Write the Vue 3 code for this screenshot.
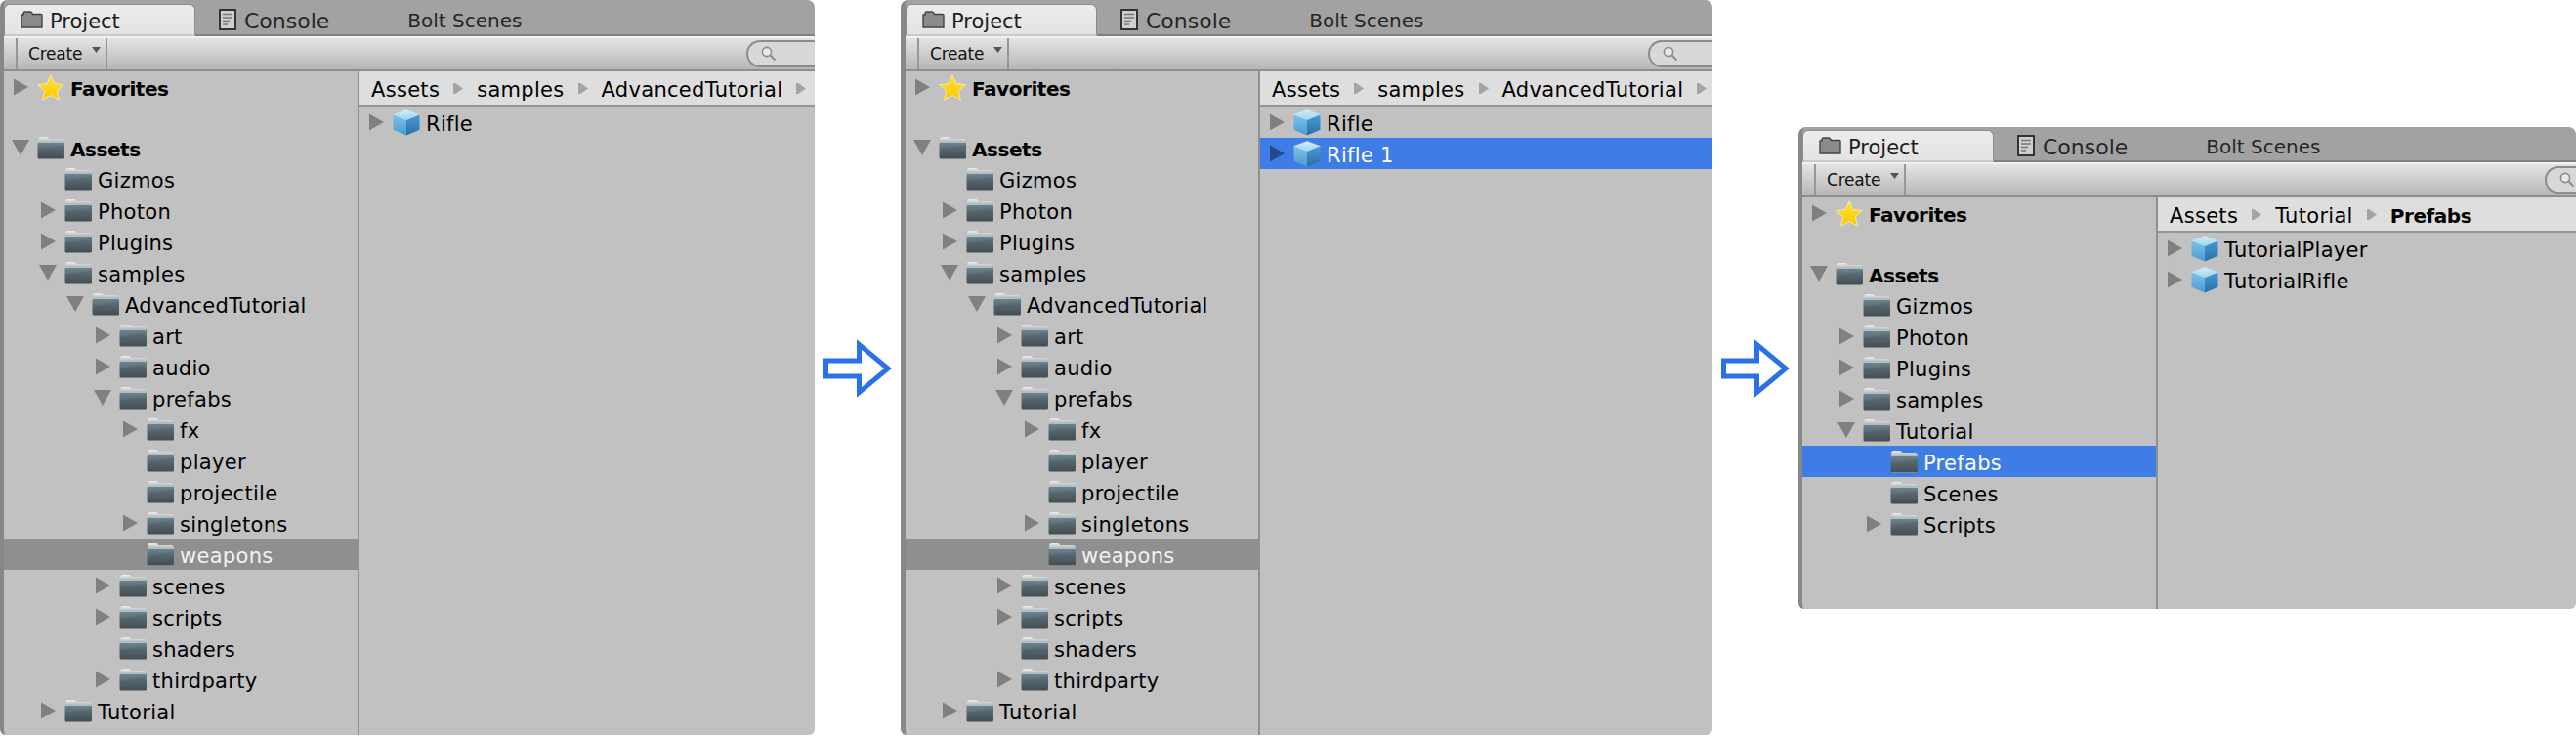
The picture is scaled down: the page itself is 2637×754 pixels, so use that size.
<script setup>
const baseTree = [
  { label: 'Favorites', depth: 0, arrow: 'r', icon: 'star', bold: true, first: true },
  { blank: true },
  { label: 'Assets', depth: 0, arrow: 'd', icon: 'folder', bold: true },
]
const longTree = [
  ...baseTree,
  { label: 'Gizmos', depth: 1, icon: 'folder' },
  { label: 'Photon', depth: 1, arrow: 'r', icon: 'folder' },
  { label: 'Plugins', depth: 1, arrow: 'r', icon: 'folder' },
  { label: 'samples', depth: 1, arrow: 'd', icon: 'folder' },
  { label: 'AdvancedTutorial', depth: 2, arrow: 'd', icon: 'folder' },
  { label: 'art', depth: 3, arrow: 'r', icon: 'folder' },
  { label: 'audio', depth: 3, arrow: 'r', icon: 'folder' },
  { label: 'prefabs', depth: 3, arrow: 'd', icon: 'folder' },
  { label: 'fx', depth: 4, arrow: 'r', icon: 'folder' },
  { label: 'player', depth: 4, icon: 'folder' },
  { label: 'projectile', depth: 4, icon: 'folder' },
  { label: 'singletons', depth: 4, arrow: 'r', icon: 'folder' },
  { label: 'weapons', depth: 4, icon: 'folder', sel: 'grey' },
  { label: 'scenes', depth: 3, arrow: 'r', icon: 'folder' },
  { label: 'scripts', depth: 3, arrow: 'r', icon: 'folder' },
  { label: 'shaders', depth: 3, icon: 'folder' },
  { label: 'thirdparty', depth: 3, arrow: 'r', icon: 'folder' },
  { label: 'Tutorial', depth: 1, arrow: 'r', icon: 'folder' },
]
const shortTree = [
  ...baseTree,
  { label: 'Gizmos', depth: 1, icon: 'folder' },
  { label: 'Photon', depth: 1, arrow: 'r', icon: 'folder' },
  { label: 'Plugins', depth: 1, arrow: 'r', icon: 'folder' },
  { label: 'samples', depth: 1, arrow: 'r', icon: 'folder' },
  { label: 'Tutorial', depth: 1, arrow: 'd', icon: 'folder' },
  { label: 'Prefabs', depth: 2, icon: 'folder', sel: 'blue' },
  { label: 'Scenes', depth: 2, icon: 'folder' },
  { label: 'Scripts', depth: 2, arrow: 'r', icon: 'folder' },
]
const longCrumbs = [{ t: 'Assets' }, { t: 'samples' }, { t: 'AdvancedTutorial' }, { sep: true }]
const panels = [
  { id: 'p1', tree: longTree, crumbs: longCrumbs,
    items: [{ label: 'Rifle', depth: 0, arrow: 'r', icon: 'cube' }] },
  { id: 'p2', tree: longTree, crumbs: longCrumbs,
    items: [
      { label: 'Rifle', depth: 0, arrow: 'r', icon: 'cube' },
      { label: 'Rifle 1', depth: 0, arrow: 'r', icon: 'cube', sel: 'blue' },
    ] },
  { id: 'p3', tree: shortTree,
    crumbs: [{ t: 'Assets' }, { t: 'Tutorial' }, { t: 'Prefabs', bold: true }],
    items: [
      { label: 'TutorialPlayer', depth: 0, arrow: 'r', icon: 'cube' },
      { label: 'TutorialRifle', depth: 0, arrow: 'r', icon: 'cube' },
    ] },
]
const indent = (r) => ({ paddingLeft: 10 + 28 * r.depth + 'px' })
</script>

<template>
  <div class="page">
    <svg class="defs" width="0" height="0" aria-hidden="true">
      <defs>
        <linearGradient id="fBody" x1="0" y1="0" x2="0" y2="1">
          <stop offset="0" stop-color="#6f8791" />
          <stop offset="0.45" stop-color="#5a6a72" />
          <stop offset="1" stop-color="#46525a" />
        </linearGradient>
        <linearGradient id="fTab" x1="0" y1="0" x2="0" y2="1">
          <stop offset="0" stop-color="#efefef" />
          <stop offset="1" stop-color="#8f9496" />
        </linearGradient>
        <linearGradient id="cTop" x1="0" y1="0" x2="0" y2="1">
          <stop offset="0" stop-color="#d4eefa" />
          <stop offset="1" stop-color="#9ad3f0" />
        </linearGradient>
        <linearGradient id="cLeft" x1="0" y1="0" x2="0" y2="1">
          <stop offset="0" stop-color="#7cc3ec" />
          <stop offset="1" stop-color="#4b9ad0" />
        </linearGradient>
        <linearGradient id="cRight" x1="0" y1="0" x2="0" y2="1">
          <stop offset="0" stop-color="#4a9bd4" />
          <stop offset="1" stop-color="#2a6fa6" />
        </linearGradient>
        <linearGradient id="sFill" x1="0" y1="0" x2="0" y2="1">
          <stop offset="0" stop-color="#ffe23a" />
          <stop offset="1" stop-color="#fcc800" />
        </linearGradient>
      </defs>
      <symbol id="i-folder" viewBox="0 0 28 24">
        <path d="M1 8V3.5C1 2 2 1 3.5 1H9.5C11 1 11.6 1.8 12.4 3H25.5C27 3 28 4 28 5.5V9H1Z" fill="url(#fTab)" />
        <rect x="0.5" y="6" width="27.5" height="18" rx="2" fill="url(#fBody)" />
        <path d="M1 6.5H27.5" stroke="#a9c0ca" stroke-width="1" />
        <path d="M1 14L27.5 9V23H1Z" fill="#000" opacity="0.06" />
        <path d="M1 23.6H27.5" stroke="#9a9a9a" stroke-width="0.8" />
      </symbol>
      <symbol id="i-cube" viewBox="0 0 28 27">
        <path d="M14 0.5L27.5 5.5L14 11L0.5 5.5Z" fill="url(#cTop)" stroke="#c5e6f7" stroke-width="0.6" stroke-linejoin="round" />
        <path d="M0.5 5.5L14 11V26.5L2 21.5C1 21 0.5 20.4 0.5 19.5Z" fill="url(#cLeft)" />
        <path d="M27.5 5.5L14 11V26.5L26 21.5C27 21 27.5 20.4 27.5 19.5Z" fill="url(#cRight)" />
      </symbol>
      <symbol id="i-star" viewBox="0 0 28 27">
        <path d="M14 0.8L18 9.6L27.4 10.6L20.4 17L22.4 26.2L14 21.5L5.6 26.2L7.6 17L0.6 10.6L10 9.6Z" fill="url(#sFill)" stroke="#f3e9b0" stroke-width="1" stroke-linejoin="round" />
      </symbol>
    </svg>

    <template v-for="(p, pi) in panels" :key="p.id">
      <div v-if="pi > 0" class="jump" :class="'jump' + pi">
        <svg width="70" height="60" viewBox="0 0 70 60">
          <path d="M2.5 22H36.5V5.5L66 30L36.5 54.5V38H2.5Z" fill="none" stroke="#2a70ea" stroke-width="5" />
        </svg>
      </div>
      <section class="panel" :class="p.id">
        <header class="tabbar">
          <div class="tab active">
            <svg class="tab-ico" width="23" height="18" viewBox="0 0 23 18">
              <path d="M1 17V4H3V2.5C3 1.7 3.7 1 4.5 1H10C11 1 11.5 1.6 12 2.5L12.5 3.5H21C21.6 3.5 22 4 22 4.5V17Z" fill="#8a8a8a" stroke="#444" stroke-width="1.4" />
            </svg>
            <span class="tab-text">Project</span>
          </div>
          <div class="tab console">
            <svg width="18" height="22" viewBox="0 0 18 22">
              <rect x="1" y="1" width="16" height="20" fill="#cfcfcf" stroke="#333" stroke-width="2" />
              <path d="M4 5.5H14M4 9H14M4 12.5H11M4 16H9" stroke="#777" stroke-width="1.6" />
            </svg>
            <span class="tab-text">Console</span>
          </div>
          <div class="tab bolt"><span class="tab-text">Bolt Scenes</span></div>
        </header>

        <div class="toolbar">
          <div class="create">
            <span>Create</span>
            <svg width="9" height="6" viewBox="0 0 9 6"><path d="M0 0H9L4.5 6Z" fill="#555" /></svg>
          </div>
          <div class="search">
            <svg width="18" height="18" viewBox="0 0 18 18">
              <circle cx="7" cy="7" r="4.6" fill="#e8e8e8" stroke="#8c8c8c" stroke-width="1.6" />
              <path d="M10.5 10.5L15.5 15.5" stroke="#8c8c8c" stroke-width="2" />
            </svg>
          </div>
        </div>

        <div class="body">
          <div class="tree">
            <template v-for="(r, i) in p.tree" :key="i">
              <div v-if="r.blank" class="row"></div>
              <div v-else class="row" :class="[r.sel, { first: r.first }]" :style="indent(r)">
                <svg class="arrow" width="24" height="20" viewBox="0 0 24 20">
                  <path v-if="r.arrow === 'r'" d="M0 1.5L15 10L0 18.5Z" />
                  <path v-else-if="r.arrow === 'd'" d="M-2 2H16L7 18Z" />
                </svg>
                <svg class="ico" width="28" :height="r.icon === 'folder' ? 24 : 27"><use :href="'#i-' + r.icon" /></svg>
                <span class="label" :class="{ bold: r.bold }">{{ r.label }}</span>
              </div>
            </template>
          </div>
          <div class="files">
            <div class="crumbs">
              <template v-for="(c, i) in p.crumbs" :key="i">
                <svg v-if="i > 0 || c.sep" class="sep" width="10" height="11" viewBox="0 0 10 11"><path d="M0 0H2L10 5.5L2 11H0Z" fill="#a3a3a3" /></svg>
                <span v-if="c.t" class="crumb" :class="{ bold: c.bold }">{{ c.t }}</span>
              </template>
            </div>
            <div v-for="(r, i) in p.items" :key="i" class="row" :class="r.sel" :style="indent(r)">
              <svg class="arrow" width="24" height="20" viewBox="0 0 24 20"><path d="M0 1.5L15 10L0 18.5Z" /></svg>
              <svg class="ico" width="28" height="27"><use href="#i-cube" /></svg>
              <span class="label">{{ r.label }}</span>
            </div>
          </div>
        </div>
      </section>
    </template>
  </div>
</template>

<style>
html, body { margin: 0; background: #fff; overflow: hidden; }
</style>

<style scoped>
.page {
  display: flex;
  align-items: flex-start;
  width: 2637px;
  height: 754px;
  overflow: hidden;
  font-family: "DejaVu Sans", "Liberation Sans", sans-serif;
  color: #000;
}
.defs { position: absolute; }

.panel {
  display: flex;
  flex-direction: column;
  flex: none;
  box-sizing: border-box;
  height: 752px;
  background: #c1c1c1;
  border-left: 4px solid #878787;
  border-radius: 8px 8px 6px 6px;
  overflow: hidden;
}
.p1 { width: 834px; }
.p2 { width: 831px; border-left-width: 5px; }
.p2 .tree { width: 361px; }
.p3 { width: 796px; height: 493px; margin-top: 130px; }
.p3 .tabbar { height: 31px; padding-top: 3px; }

.jump { flex: none; margin-top: 347px; line-height: 0; width: 70px; margin-left: 9px; margin-right: 9px; }

.tabbar {
  display: flex;
  align-items: stretch;
  box-sizing: content-box;
  height: 31px;
  padding-top: 4px;
  background: #a2a2a2;
  border-bottom: 2px solid #808080;
  flex: none;
}
.tab {
  display: flex;
  align-items: center;
  font-size: 20px;
  color: #262626;
}
.tab-text { padding-top: 3px; }
.tab.active {
  box-sizing: border-box;
  width: 196px;
  height: 33px;
  padding-left: 16px;
  gap: 7px;
  font-size: 21px;
  color: #1c1c1c;
  background: linear-gradient(#ececec, #e3e3e3);
  border: 1px solid #8c8c8c;
  border-bottom: 2px solid #cacaca;
  border-radius: 6px 6px 0 0;
}
.tab-ico { margin-top: -1px; }
.console { margin-left: 24px; gap: 8px; font-size: 22px; }
.bolt { margin-left: 80px; }

.toolbar {
  display: flex;
  align-items: stretch;
  flex: none;
  height: 32px;
  border-top: 2px solid #f1f1f1;
  border-bottom: 2px solid #8e8e8e;
  background: linear-gradient(#e4e4e4, #b6b6b6);
}
.create {
  display: flex;
  align-items: center;
  flex: none;
  box-sizing: border-box;
  width: 94px;
  margin-left: 12px;
  padding-left: 11px;
  gap: 10px;
  font-size: 17px;
  letter-spacing: -0.2px;
  color: #111;
  border-left: 2px solid #979797;
  border-right: 2px solid #979797;
}
.create svg { margin-top: -8px; }
.search {
  display: flex;
  align-items: center;
  box-sizing: border-box;
  width: 120px;
  height: 28px;
  margin: 2px 0 0 654px;
  padding-left: 12px;
  flex: none;
  background: #d8d8d8;
  border: 2px solid #8c8c8c;
  border-right: 0;
  border-radius: 14px 0 0 14px;
}

.body { display: flex; flex: 1; min-height: 0; }
.tree {
  box-sizing: content-box;
  width: 362px;
  flex: none;
  border-right: 2px solid #8f8f8f;
}
.files { flex: 1; min-width: 0; }

.row {
  display: flex;
  align-items: center;
  height: 32px;
  box-sizing: border-box;
  white-space: nowrap;
}
.row.first { height: 30px; padding-top: 2px; }
.row.grey { background: #8f8f8f; color: #f2f2f2; }
.row.blue { background: #3e7ce6; color: #fff; }

.arrow { flex: none; overflow: visible; fill: #808080; }
.row.blue .arrow { fill: #24498f; }
.ico { flex: none; overflow: visible; }
.label { margin-left: 6px; padding-top: 4px; font-size: 21px; letter-spacing: 0.3px; }
.files .label { margin-left: 6px; }
.label.bold, .crumb.bold { font-weight: 700; font-size: 20px; letter-spacing: -0.45px; }

.crumbs {
  display: flex;
  align-items: center;
  box-sizing: content-box;
  height: 34px;
  padding-left: 12px;
  gap: 14px;
  background: #dedede;
  border-bottom: 2px solid #959595;
  font-size: 21px;
  letter-spacing: 0.3px;
  white-space: nowrap;
  overflow: hidden;
}
.crumb { padding-top: 4px; }
.sep { flex: none; }
</style>
